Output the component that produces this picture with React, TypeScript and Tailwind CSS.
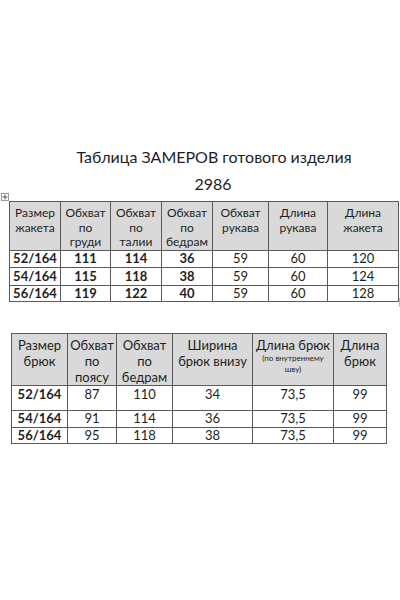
import React from "react";

const F = { fontFamily: "Lato, 'Open Sans', sans-serif" };

function MoveHandle() {
  return (
    <svg width="8" height="8" viewBox="0 0 8 8" className="absolute left-[1px] top-[193px]">
      <rect x="0.5" y="0.5" width="7" height="7" fill="white" stroke="#999" strokeWidth="1" />
      <path d="M4 1.5V6.5M1.5 4H6.5" stroke="#555" strokeWidth="1" />
    </svg>
  );
}

export default function App() {
  const t1 = [
    ["52/164", "111", "114", "36", "59", "60", "120"],
    ["54/164", "115", "118", "38", "59", "60", "124"],
    ["56/164", "119", "122", "40", "59", "60", "128"],
  ];
  const t2 = [
    ["52/164", "87", "110", "34", "73,5", "99"],
    ["54/164", "91", "114", "36", "73,5", "99"],
    ["56/164", "95", "118", "38", "73,5", "99"],
  ];
  const rowH1 = ["h-[17px]", "h-[18px]", "h-[16px]"];
  const rowH2 = ["h-[25px] align-top pt-[1px]", "h-[17px]", "h-[16px]"];
  const th = "border border-[#5a5a5a] bg-[#d9d9d9] align-top font-normal text-center p-0";
  const td = "border border-[#5a5a5a] text-center p-0";
  return (
    <div className="relative w-[400px] h-[600px] bg-white text-[#1e1e1e] overflow-hidden" style={F}>
      <MoveHandle />
      <div className="absolute right-0 top-[298px] w-[1px] h-[9px] bg-[#bbb]" />
      <div className="flex flex-col">
        <div className="pt-[147px] text-center text-[16px] leading-[20px] pl-[28px]">
          Таблица ЗАМЕРОВ готового изделия
        </div>
        <div className="pt-[7px] text-center text-[16px] leading-[20px] pl-[26px]">2986</div>
        <div className="pl-[9px] pt-[7px]">
          <table className="table-fixed border-collapse w-[389px]">
            <colgroup>
              <col className="w-[51px]" />
              <col className="w-[50px]" />
              <col className="w-[51px]" />
              <col className="w-[51px]" />
              <col className="w-[56px]" />
              <col className="w-[59px]" />
              <col className="w-[71px]" />
            </colgroup>
            <thead>
              <tr className="h-[46px] text-[12px] leading-[14.5px]">
                <th className={th}><div className="pt-[4px]">Размер<br />жакета</div></th>
                <th className={th}><div className="pt-[4px]">Обхват<br />по<br />груди</div></th>
                <th className={th}><div className="pt-[4px]">Обхват<br />по<br />талии</div></th>
                <th className={th}><div className="pt-[4px]">Обхват<br />по<br />бедрам</div></th>
                <th className={th}><div className="pt-[4px]">Обхват<br />рукава</div></th>
                <th className={th}><div className="pt-[4px]">Длина<br />рукава</div></th>
                <th className={th}><div className="pt-[4px]">Длина<br />жакета</div></th>
              </tr>
            </thead>
            <tbody>
              {t1.map((r, i) => (
                <tr key={i} className={`${rowH1[i]} text-[13px] leading-[15px]`}>
                  {r.map((c, j) => (
                    <td key={j} className={`${td} ${j < 4 ? "font-bold" : ""}`}>{c}</td>
                  ))}
                </tr>
              ))}
            </tbody>
          </table>
        </div>
        <div className="pl-[11px] pt-[31px]">
          <table className="table-fixed border-collapse w-[375px]">
            <colgroup>
              <col className="w-[56px]" />
              <col className="w-[49px]" />
              <col className="w-[56px]" />
              <col className="w-[80px]" />
              <col className="w-[81px]" />
              <col className="w-[53px]" />
            </colgroup>
            <thead>
              <tr className="h-[51px] text-[13px] leading-[16px]">
                <th className={th}><div className="pt-[3px]">Размер<br />брюк</div></th>
                <th className={th}><div className="pt-[3px]">Обхват<br />по<br />поясу</div></th>
                <th className={th}><div className="pt-[3px]">Обхват<br />по<br />бедрам</div></th>
                <th className={th}><div className="pt-[3px]">Ширина<br />брюк внизу</div></th>
                <th className={th}>
                  <div className="pt-[3px]">Длина брюк</div>
                  <div className="text-[8px] leading-[11px]">(по внутреннему<br />шву)</div>
                </th>
                <th className={th}><div className="pt-[3px]">Длина<br />брюк</div></th>
              </tr>
            </thead>
            <tbody>
              {t2.map((r, i) => (
                <tr key={i} className={`text-[13px] leading-[15px]`}>
                  {r.map((c, j) => (
                    <td key={j} className={`${td} ${rowH2[i]} ${j === 0 ? "font-bold" : ""}`}>{c}</td>
                  ))}
                </tr>
              ))}
            </tbody>
          </table>
        </div>
      </div>
    </div>
  );
}
